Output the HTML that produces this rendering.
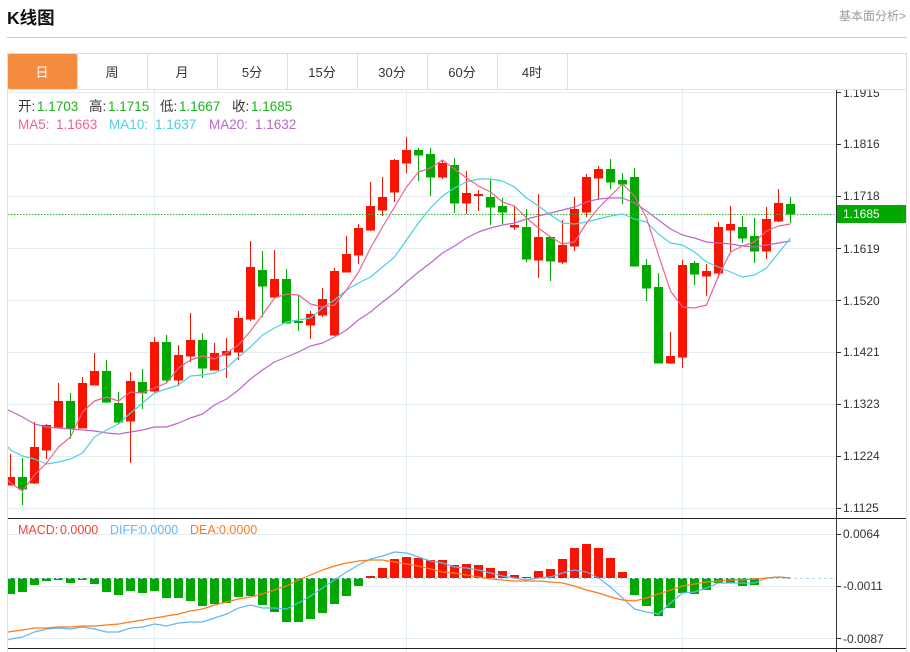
<!DOCTYPE html>
<html lang="zh">
<head>
<meta charset="utf-8">
<title>K线图</title>
<style>
html,body{margin:0;padding:0;background:#fff;}
body{width:910px;height:652px;overflow:hidden;position:relative;}
svg{position:absolute;left:0;top:0;display:block;}
text{font-family:"Liberation Sans","Noto Sans CJK SC",sans-serif;}
</style>
</head>
<body>
<svg width="910" height="652" viewBox="0 0 910 652" xmlns="http://www.w3.org/2000/svg">
<defs>
<clipPath id="p"><rect x="8" y="90" width="828" height="428"/></clipPath>
<clipPath id="m"><rect x="8" y="519" width="828" height="129"/></clipPath>
<clipPath id="ax"><rect x="837" y="90" width="69" height="560"/></clipPath>
</defs>

<!-- header -->
<text x="7" y="24" font-size="17.500" font-weight="700" fill="#111">K线图</text>
<text x="839" y="20" font-size="12" fill="#999">基本面分析&gt;</text>
<rect x="7" y="37" width="900" height="1" fill="#ccc"/>

<!-- tabs -->
<rect x="7" y="53" width="900" height="1" fill="#ddd"/>
<rect x="7" y="89" width="900" height="1" fill="#dde3e6"/>
<rect x="7" y="53" width="1" height="599" fill="#ddd"/>
<rect x="906" y="53" width="1" height="599" fill="#ddd"/>
<rect x="8" y="54" width="69" height="35" rx="1.5" fill="#f58b3e"/>
<g fill="#ddd">
<rect x="77" y="54" width="1" height="35"/><rect x="147" y="54" width="1" height="35"/><rect x="217" y="54" width="1" height="35"/><rect x="287" y="54" width="1" height="35"/><rect x="357" y="54" width="1" height="35"/><rect x="427" y="54" width="1" height="35"/><rect x="497" y="54" width="1" height="35"/><rect x="567" y="54" width="1" height="35"/>
</g>
<g font-size="13" fill="#333" text-anchor="middle">
<text x="42" y="77" fill="#fff">日</text>
<text x="112" y="77">周</text>
<text x="182" y="77">月</text>
<text x="252" y="77">5分</text>
<text x="322" y="77">15分</text>
<text x="392" y="77">30分</text>
<text x="462" y="77">60分</text>
<text x="532" y="77">4时</text>
</g>

<!-- grid -->
<g fill="#e4edf3">
<rect x="8" y="92" width="828" height="1"/><rect x="8" y="144" width="828" height="1"/><rect x="8" y="196" width="828" height="1"/><rect x="8" y="248" width="828" height="1"/><rect x="8" y="300" width="828" height="1"/><rect x="8" y="352" width="828" height="1"/><rect x="8" y="404" width="828" height="1"/><rect x="8" y="456" width="828" height="1"/><rect x="8" y="508" width="828" height="1"/>
<rect x="8" y="534" width="828" height="1"/><rect x="8" y="586" width="828" height="1"/><rect x="8" y="638" width="828" height="1"/>
<rect x="154" y="90" width="1" height="562"/><rect x="406" y="90" width="1" height="562"/><rect x="682" y="90" width="1" height="562"/>
</g>

<!-- candles -->
<g clip-path="url(#p)">
<path fill="none" stroke="#f51500" stroke-width="1" d="M10.5 454V485M34.5 422V484M46.5 424V459M58.5 383V428M82.5 377V428M94.5 353V385M130.5 372V463M154.5 337V393M178.5 345V386M190.5 313V362M214.5 343V370M226.5 338V378M238.5 311V360M250.5 241V321M274.5 250V298M310.5 311V339M322.5 288V317M334.5 268V336M346.5 236V272M358.5 224V264M370.5 182V231M382.5 177V216M394.5 159V202M406.5 137V173M442.5 160V179M466.5 171V214M478.5 190V211M514.5 206V230M538.5 194V278M562.5 220V264M574.5 197V251M586.5 174V217M598.5 166V200M670.5 332V364M682.5 260V368M706.5 264V296M718.5 222V278M730.5 206V252M766.5 207V259M778.5 189V222"/>
<path fill="#f51500" d="M6 477h9v8.500h-9zM30 447h9v36.500h-9zM42 425h9v25.500h-9zM54 401h9v26.500h-9zM78 383h9v45.500h-9zM90 371h9v14.500h-9zM126 381h9v40.500h-9zM150 342h9v49.500h-9zM174 355h9v25.500h-9zM186 340h9v16.500h-9zM210 353h9v17.500h-9zM222 351h9v4.500h-9zM234 318h9v34.500h-9zM246 267h9v52.500h-9zM270 279h9v18.500h-9zM306 314h9v11.500h-9zM318 299h9v16.500h-9zM330 271h9v64.500h-9zM342 254h9v18.500h-9zM354 228h9v27.500h-9zM366 206h9v24.500h-9zM378 197h9v13.500h-9zM390 160h9v32.500h-9zM402 150h9v13.500h-9zM438 163h9v14.500h-9zM462 193h9v10.500h-9zM474 194h9v2h-9zM510 225h9v2.500h-9zM534 237h9v23.500h-9zM558 245h9v17.500h-9zM570 209h9v37.500h-9zM582 177h9v35.500h-9zM594 169h9v9.500h-9zM666 356h9v7.500h-9zM678 265h9v92.500h-9zM702 271h9v5.500h-9zM714 227h9v46.500h-9zM726 224h9v6.500h-9zM762 219h9v32.500h-9zM774 203h9v18.500h-9z"/>
<path fill="none" stroke="#00a800" stroke-width="1" d="M22.5 458V505M70.5 393V439M106.5 360V403M118.5 392V424M142.500 369V409M166.500 335V382M202.500 333V378M262.500 251V317M286.500 269V323M298.500 295V331M418.500 148V181M430.500 148V196M454.500 158V213M490.500 179V225M502.500 198V224M526.500 209V262M550.500 236V281M610.500 159V189M622.500 173V204M634.500 168V266M646.500 259V301M658.500 273V363M694.500 261V285M742.500 216V243M754.500 218V263M790.500 197V223"/>
<path fill="#00a800" d="M18 477h9v12.500h-9zM66 401h9v27.500h-9zM102 371h9v31.500h-9zM114 403h9v19.500h-9zM138 382h9v11.500h-9zM162 342h9v38.500h-9zM198 340h9v28.500h-9zM258 270h9v16.500h-9zM282 279h9v44.500h-9zM294 321h9v2h-9zM414 150h9v5.500h-9zM426 154h9v23.500h-9zM450 165h9v38.500h-9zM486 197h9v10.500h-9zM498 206h9v6.500h-9zM522 227h9v32.500h-9zM546 237h9v24.500h-9zM606 169h9v13.500h-9zM618 180h9v4.500h-9zM630 177h9v89.500h-9zM642 265h9v23.500h-9zM654 287h9v76.500h-9zM690 263h9v11.500h-9zM738 227h9v11.500h-9zM750 236h9v15.500h-9zM786 204h9v10.500h-9z"/>

<!-- last price dotted -->
<line x1="8" y1="214.500" x2="836" y2="214.500" stroke="#2fb52f" stroke-width="1" stroke-dasharray="1.500 1.500"/>

<!-- MA20 -->
<polyline fill="none" stroke="#ba68c8" stroke-width="1.200" stroke-linejoin="round" points="8,410 10.500,411 22.500,417 34.500,424 46.500,427 58.500,428 70.500,429 82.500,430 94.500,431 106.500,433 118.500,434 130.500,432 142.500,430 154.500,427 166.500,427 178.500,423 190.500,418 202.500,414 214.500,405 226.500,399 238.500,390 250.500,379 262.500,370 274.500,362 286.500,357 298.500,352 310.500,346 322.500,343 334.500,337 346.500,330 358.500,320 370.500,312 382.500,302 394.500,293 406.500,282 418.500,272 430.500,263 442.500,253 454.500,246 466.500,238 478.500,232 490.500,228 502.500,225 514.500,223 526.500,219 538.500,216 550.500,213 562.500,210 574.500,207 586.500,202 598.500,199 610.500,198 622.500,198 634.500,203 646.500,211 658.500,220 670.500,229 682.500,235 694.500,238 706.500,242 718.500,243 730.500,244 742.500,246 754.500,247 766.500,245 778.500,243 790.500,241"/>
<!-- MA10 -->
<polyline fill="none" stroke="#4dd0e1" stroke-width="1.200" stroke-linejoin="round" points="8,447 10.500,450 22.500,456 34.500,459 46.500,464 58.500,462 70.500,459 82.500,453 94.500,437 106.500,430 118.500,424 130.500,413 142.500,403 154.500,393 166.500,389 178.500,385 190.500,376 202.500,375 214.500,373 226.500,368 238.500,357 250.500,347 262.500,335 274.500,328 286.500,322 298.500,320 310.500,318 322.500,308 334.500,300 346.500,290 358.500,283 370.500,277 382.500,267 394.500,257 406.500,240 418.500,223 430.500,208 442.500,196 454.500,188 466.500,182 478.500,179 490.500,179 502.500,181 514.500,187 526.500,198 538.500,206 550.500,215 562.500,223 574.500,224 586.500,222 598.500,219 610.500,216 622.500,214 634.500,219 646.500,222 658.500,234 670.500,243 682.500,245 694.500,252 706.500,262 718.500,267 730.500,272 742.500,277 754.500,275 766.500,268 778.500,253 790.500,238"/>
<!-- MA5 -->
<polyline fill="none" stroke="#f06292" stroke-width="1.200" stroke-linejoin="round" points="8,480 10.500,483 22.500,491 34.500,475 46.500,463 58.500,447 70.500,437 82.500,412 94.500,401 106.500,397 118.500,401 130.500,392 142.500,393 154.500,388 166.500,383 178.500,368 190.500,360 202.500,356 214.500,359 226.500,353 238.500,345 250.500,331 262.500,315 274.500,298 286.500,294 298.500,295 310.500,304 322.500,307 334.500,305 346.500,290 358.500,272 370.500,248 382.500,227 394.500,207 406.500,187 418.500,172 430.500,168 442.500,160 454.500,169 466.500,178 478.500,186 490.500,192 502.500,202 514.500,206 526.500,218 538.500,228 550.500,237 562.500,244 574.500,242 586.500,223 598.500,208 610.500,196 622.500,184 634.500,196 646.500,218 658.500,255 670.500,291 682.500,307 694.500,308 706.500,305 718.500,276 730.500,252 742.500,246 754.500,242 766.500,231 778.500,226 790.500,224"/>
</g>

<!-- MACD -->
<g clip-path="url(#m)">
<path fill="#00a800" d="M6 578h9v16h-9zM18 578h9v14h-9zM30 578h9v7h-9zM42 578h9v3h-9zM54 578h9v2h-9zM66 578h9v5h-9zM78 578h9v2h-9zM90 578h9v6h-9zM102 578h9v14h-9zM114 578h9v17h-9zM126 578h9v13h-9zM138 578h9v15h-9zM150 578h9v13h-9zM162 578h9v20h-9zM174 578h9v20h-9zM186 578h9v23h-9zM198 578h9v28h-9zM210 578h9v26h-9zM222 578h9v25h-9zM234 578h9v19h-9zM246 578h9v18h-9zM258 578h9v27h-9zM270 578h9v34h-9zM282 578h9v44h-9zM294 578h9v44h-9zM306 578h9v41h-9zM318 578h9v35h-9zM330 578h9v26h-9zM342 578h9v18h-9zM354 578h9v8h-9zM630 578h9v17h-9zM642 578h9v28h-9zM654 578h9v38h-9zM666 578h9v30h-9zM678 578h9v15h-9zM690 578h9v16h-9zM702 578h9v12h-9zM714 578h9v5h-9zM726 578h9v5h-9zM738 578h9v8h-9zM750 578h9v7h-9z"/>
<path fill="#f51500" d="M366 576h9v2h-9zM378 568h9v10h-9zM390 559h9v19h-9zM402 557h9v21h-9zM414 558h9v20h-9zM426 560h9v18h-9zM438 560h9v18h-9zM450 565h9v13h-9zM462 564h9v14h-9zM474 565h9v13h-9zM486 568h9v10h-9zM498 571h9v7h-9zM510 575h9v3h-9zM522 577h9v1h-9zM534 571h9v7h-9zM546 569h9v9h-9zM558 559h9v19h-9zM570 548h9v30h-9zM582 544h9v34h-9zM594 548h9v30h-9zM606 558h9v20h-9zM618 572h9v6h-9z"/>
<rect x="774" y="576.500" width="9" height="1.500" fill="#e8b0b0"/>
<line x1="8" y1="578.500" x2="836" y2="578.500" stroke="#aed8ea" stroke-width="1" stroke-dasharray="3 3"/>
<polyline fill="none" stroke="#64b5f6" stroke-width="1.200" stroke-linejoin="round" points="8,640 10.500,639 22.500,637 34.500,632 46.500,629 58.500,628 70.500,629 82.500,627 94.500,629 106.500,632 118.500,632 130.500,628 142.500,627 154.500,624 166.500,626 178.500,623 190.500,622 202.500,622 214.500,618 226.500,614 238.500,608 250.500,605 262.500,608 274.500,608 286.500,609 298.500,603 310.500,596 322.500,588 334.500,580 346.500,572 358.500,565 370.500,559 382.500,556 394.500,552 406.500,553 418.500,557 430.500,561 442.500,563 454.500,567 466.500,568 478.500,570 490.500,573 502.500,576 514.500,578 526.500,580 538.500,578 550.500,577 562.500,573 574.500,570 586.500,572 598.500,578 610.500,587 622.500,598 634.500,609 646.500,612 658.500,614 670.500,603 682.500,593 694.500,592 706.500,588 718.500,583 730.500,583 742.500,583 754.500,583 766.500,578 778.500,577 790.500,578"/>
<polyline fill="none" stroke="#ff7a1c" stroke-width="1.200" stroke-linejoin="round" points="8,632 22.500,630 34.500,628 46.500,628 58.500,627 70.500,627 82.500,626 94.500,626 106.500,625 118.500,624 130.500,622 142.500,620 154.500,618 166.500,616 178.500,614 190.500,611 202.500,609 214.500,605 226.500,602 238.500,599 250.500,597 262.500,594 274.500,590 286.500,586 298.500,580 310.500,575 322.500,570 334.500,566 346.500,563 358.500,561 370.500,560 382.500,560 394.500,562 406.500,564 418.500,566 430.500,569 442.500,572 454.500,573 466.500,575 478.500,577 490.500,579 502.500,580 514.500,581 526.500,581 538.500,581 550.500,582 562.500,583 574.500,586 586.500,590 598.500,593 610.500,597 622.500,600 634.500,601 646.500,598 658.500,594 670.500,590 682.500,586 694.500,584 706.500,582 718.500,581 730.500,580 742.500,580 754.500,579 766.500,578 778.500,577 790.500,578"/>
</g>

<!-- pane separators & axis -->
<rect x="8" y="518" width="898" height="1" fill="#222"/>
<rect x="8" y="648" width="898" height="1" fill="#222"/>
<rect x="836" y="90" width="1" height="562" fill="#333"/>
<g fill="#333">
<rect x="837" y="92" width="4" height="1"/><rect x="837" y="144" width="4" height="1"/><rect x="837" y="196" width="4" height="1"/><rect x="837" y="248" width="4" height="1"/><rect x="837" y="300" width="4" height="1"/><rect x="837" y="352" width="4" height="1"/><rect x="837" y="404" width="4" height="1"/><rect x="837" y="456" width="4" height="1"/><rect x="837" y="508" width="4" height="1"/>
<rect x="837" y="534" width="4" height="1"/><rect x="837" y="586" width="4" height="1"/><rect x="837" y="638" width="4" height="1"/>
</g>
<g font-size="12" fill="#333" clip-path="url(#ax)">
<text x="843" y="97">1.1915</text>
<text x="843" y="148">1.1816</text>
<text x="843" y="200">1.1718</text>
<text x="843" y="253">1.1619</text>
<text x="843" y="305">1.1520</text>
<text x="843" y="356">1.1421</text>
<text x="843" y="408">1.1323</text>
<text x="843" y="460">1.1224</text>
<text x="843" y="512">1.1125</text>
<text x="843" y="538">0.0064</text>
<text x="843" y="590">-0.0011</text>
<text x="843" y="643">-0.0087</text>
</g>
<rect x="837" y="205" width="69" height="18" fill="#00a800"/>
<text x="843" y="218" font-size="12" fill="#fff">1.1685</text>

<!-- legends -->
<g font-size="13.500">
<text x="18" y="111" fill="#333">开:</text><text x="37" y="111" fill="#1db01d">1.1703</text>
<text x="89" y="111" fill="#333">高:</text><text x="108" y="111" fill="#1db01d">1.1715</text>
<text x="160" y="111" fill="#333">低:</text><text x="179" y="111" fill="#1db01d">1.1667</text>
<text x="232" y="111" fill="#333">收:</text><text x="251" y="111" fill="#1db01d">1.1685</text>
<text x="18" y="129" fill="#f06292">MA5:</text><text x="56" y="129" fill="#f06292">1.1663</text>
<text x="109" y="129" fill="#4dd0e1">MA10:</text><text x="155" y="129" fill="#4dd0e1">1.1637</text>
<text x="209" y="129" fill="#ba68c8">MA20:</text><text x="255" y="129" fill="#ba68c8">1.1632</text>
</g>
<g font-size="12.500">
<text x="18" y="534" fill="#f44336">MACD:</text><text x="60" y="534" fill="#f44336">0.0000</text>
<text x="110" y="534" fill="#64b5f6">DIFF:</text><text x="140" y="534" fill="#64b5f6">0.0000</text>
<text x="190" y="534" fill="#ff7a1c">DEA:</text><text x="219" y="534" fill="#ff7a1c">0.0000</text>
</g>
</svg>
</body>
</html>
